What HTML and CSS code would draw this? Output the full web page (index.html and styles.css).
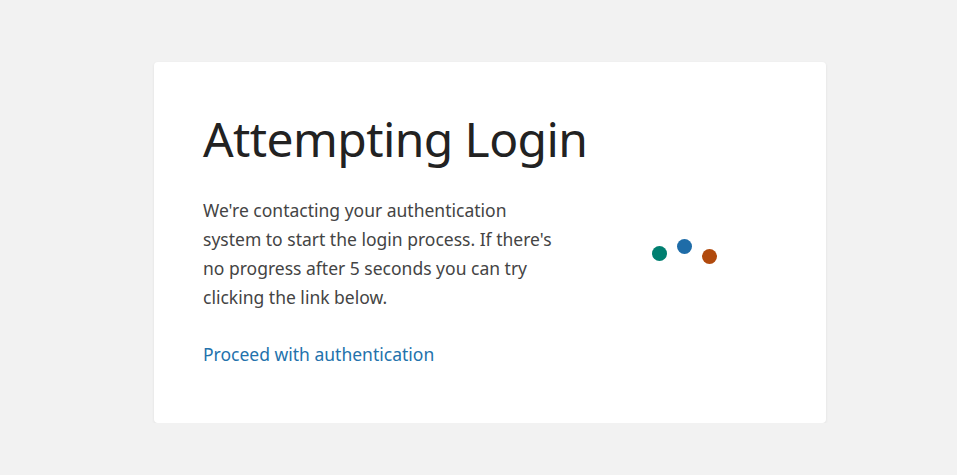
FILE: index.html
```html
<!DOCTYPE html>
<html lang="en">
<head>
<meta charset="utf-8">
<title>Attempting Login</title>
<link rel="stylesheet" href="styles.css">
</head>
<body>
<main class="page">
  <section class="card">
    <h1 class="title">Attempting Login</h1>
    <div class="content">
      <div class="text">
        <p class="desc">We're contacting your authentication system to start the login process. If there's no progress after 5 seconds you can try clicking the link below.</p>
        <a class="link" href="#">Proceed with authentication</a>
      </div>
      <div class="spinner">
        <span class="dot dot-teal"></span>
        <span class="dot dot-blue"></span>
        <span class="dot dot-orange"></span>
      </div>
    </div>
  </section>
</main>
</body>
</html>
```

FILE: styles.css
```css
html, body {
  margin: 0;
  padding: 0;
  background: #f2f2f2;
  font-family: "Noto Sans", "Open Sans", sans-serif;
}
.page {
  display: flex;
  justify-content: center;
  padding-top: 62px;
  padding-left: 23px;
}
.card {
  width: 672px;
  box-sizing: border-box;
  background: #fff;
  border-radius: 4px;
  box-shadow: 0 1px 3px rgba(0,0,0,0.08);
  padding: 48px 48px 54px 49px;
}
.title {
  margin: 0;
  font-weight: 400;
  font-size: 48px;
  line-height: 58px;
  color: #222;
  letter-spacing: -0.6px;
}
.content {
  display: flex;
  margin-top: 28px;
}
.text {
  width: 356px;
  flex: none;
}
.desc {
  margin: 0;
  font-size: 17.5px;
  line-height: 29px;
  color: #444;
}
.link {
  display: block;
  margin-top: 28px;
  font-size: 17.5px;
  line-height: 29px;
  color: #2372ac;
  text-decoration: none;
}
.spinner {
  flex: 1;
  display: flex;
  justify-content: center;
  gap: 10px;
  padding-top: 50px;
  padding-left: 32px;
}
.dot {
  width: 15px;
  height: 15px;
  border-radius: 50%;
}
.dot-teal { background: #007f70; }
.dot-blue { background: #1e6ca8; transform: translateY(-7px); }
.dot-orange { background: #b14a0d; transform: translateY(3px); }
```
